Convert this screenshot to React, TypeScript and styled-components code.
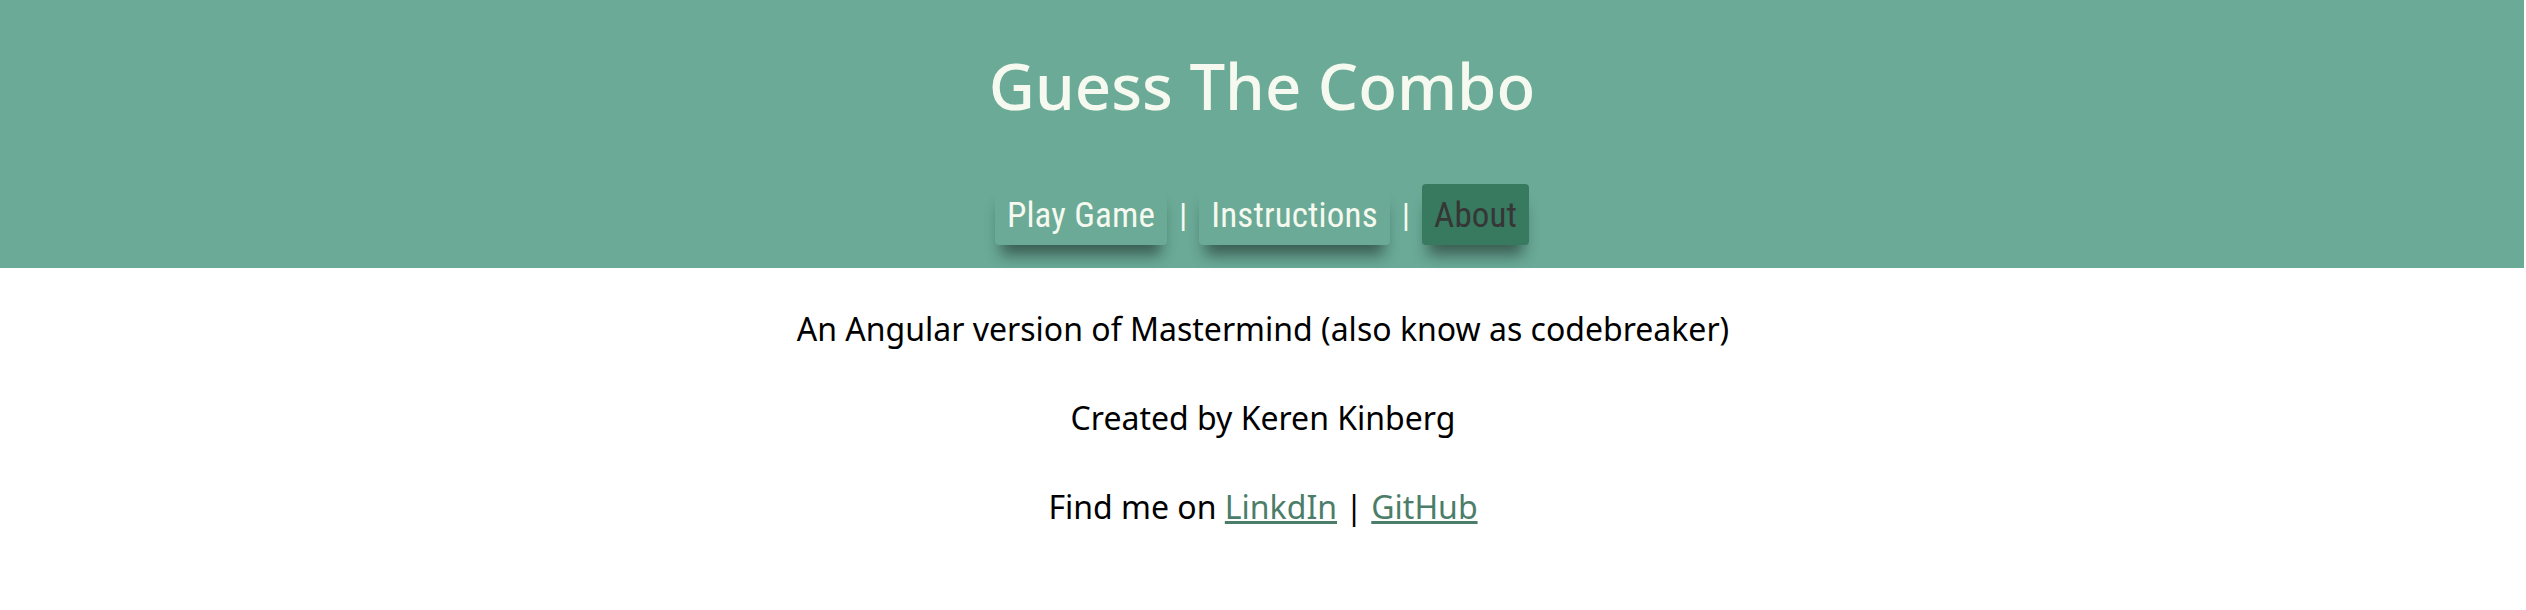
import React from "react";
import styled, { createGlobalStyle } from "styled-components";

const Global = createGlobalStyle`
  html, body { margin: 0; padding: 0; background: #ffffff; }
  body { font-family: "Noto Sans", sans-serif; }
`;

const Header = styled.header`
  width: calc(100% - 2px);
  height: 268px;
  background: #6aaa96;
  display: flex;
  flex-direction: column;
  align-items: center;
  box-sizing: border-box;
  padding-top: 42px;
`;

const Title = styled.h1`
  margin: 0;
  font-family: "Noto Sans", sans-serif;
  font-weight: 500;
  font-size: 63.5px;
  line-height: 87px;
  color: #f6f9ef;
`;

const Nav = styled.nav`
  display: flex;
  align-items: center;
  margin-top: 55px;
`;

const NavButton = styled.a<{ $active?: boolean }>`
  display: flex;
  align-items: center;
  height: 61px;
  padding: 2px 12px 0;
  box-sizing: border-box;
  border-radius: 4px;
  background: ${(p) => (p.$active ? "#387a60" : "#6aaa96")};
  color: ${(p) => (p.$active ? "#363636" : "#f6f9ef")};
  font-family: "Roboto Condensed", Roboto, sans-serif;
  font-size: 35px;
  letter-spacing: 0.15px;
  box-shadow: 0 16px 14px -6px rgba(0, 0, 0, 0.45);
  cursor: pointer;
`;

const Separator = styled.span`
  font-family: Roboto, sans-serif;
  font-size: 34px;
  color: #f6f9ef;
  margin: 0 12px;
`;

const Content = styled.main`
  display: flex;
  flex-direction: column;
  align-items: center;
  padding-top: 39px;
`;

const Line = styled.p`
  margin: 0 0 45px;
  font-family: "Noto Sans", sans-serif;
  font-size: 32px;
  line-height: 44px;
  color: #000000;
`;

const Link = styled.a`
  color: #4b7d69;
  text-decoration: underline;
  cursor: pointer;
`;

export default function App() {
  return (
    <>
      <Global />
      <Header>
        <Title>Guess The Combo</Title>
        <Nav>
          <NavButton>Play Game</NavButton>
          <Separator>|</Separator>
          <NavButton>Instructions</NavButton>
          <Separator>|</Separator>
          <NavButton $active>About</NavButton>
        </Nav>
      </Header>
      <Content>
        <Line>An Angular version of Mastermind (also know as codebreaker)</Line>
        <Line>Created by Keren Kinberg</Line>
        <Line>
          Find me on <Link>LinkdIn</Link> | <Link>GitHub</Link>
        </Line>
      </Content>
    </>
  );
}
